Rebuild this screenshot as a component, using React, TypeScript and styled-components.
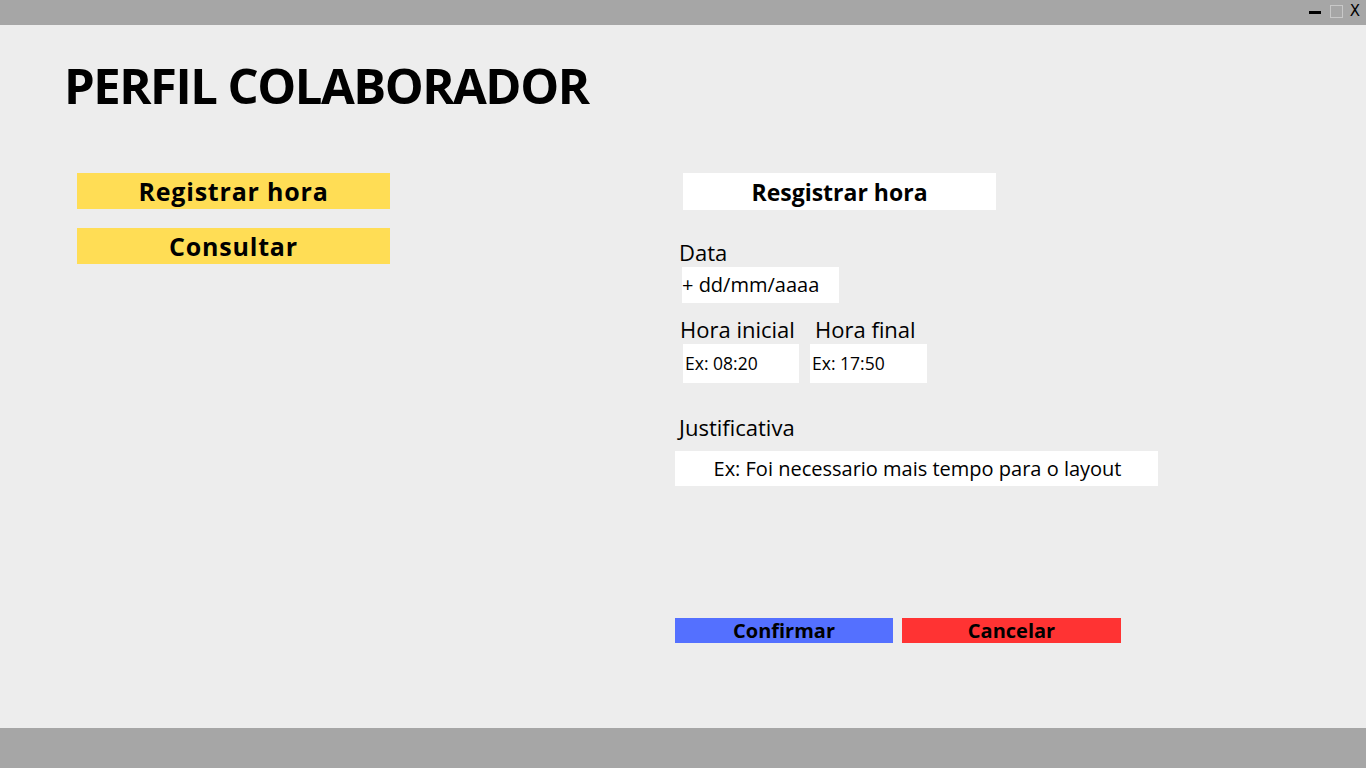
import React from "react";
import styled, { createGlobalStyle } from "styled-components";

const Global = createGlobalStyle`
  html, body { margin: 0; padding: 0; }
  body { font-family: "Open Sans", "Noto Sans", sans-serif; color: #000; }
`;

const Page = styled.div`
  display: flex;
  flex-direction: column;
  width: 1366px;
  height: 768px;
  overflow: hidden;
`;

const TopBar = styled.div`
  height: 25px;
  background: #a6a6a6;
  display: flex;
  justify-content: flex-end;
  align-items: center;
  padding-right: 6px;
`;

const MinIcon = styled.div`
  width: 12px;
  height: 3px;
  background: #000;
  margin-top: -1px;
`;

const MaxIcon = styled.div`
  width: 11px;
  height: 11px;
  border: 1px solid #c8c8c8;
  margin: -2px 7px 0 9px;
`;

const CloseIcon = styled.span`
  font-family: "DejaVu Sans", sans-serif;
  font-size: 15px;
  line-height: 15px;
  margin-top: -2px;
`;

const Main = styled.main`
  flex: 1;
  background: #ededed;
  padding-top: 30px;
`;

const Title = styled.h1`
  margin: 0 0 0 64px;
  font-size: 49px;
  line-height: 60px;
  font-weight: 700;
  letter-spacing: -1.5px;
`;

const Columns = styled.div`
  display: grid;
  grid-template-columns: 313px 483px;
  column-gap: 285px;
  padding-left: 77px;
  margin-top: 58px;
`;

const Menu = styled.nav`
  display: flex;
  flex-direction: column;
  gap: 19px;
`;

const MenuButton = styled.button`
  width: 313px;
  height: 36px;
  border: none;
  background: #ffdd55;
  font-family: inherit;
  font-weight: 700;
  font-size: 25px;
  letter-spacing: 0.8px;
  line-height: 33px;
  padding: 0;
  color: #000;
`;

const Form = styled.section`
  display: flex;
  flex-direction: column;
`;

const Heading = styled.div`
  margin-left: 8px;
  width: 313px;
  height: 37px;
  background: #fff;
  font-weight: 700;
  font-size: 23px;
  line-height: 39px;
  text-align: center;
`;

const Label = styled.div<{ $top: number; $left?: number }>`
  margin-top: ${(p) => p.$top}px;
  margin-left: ${(p) => p.$left ?? 4}px;
  font-size: 22px;
  line-height: 24px;
  white-space: nowrap;
`;

const Field = styled.div<{ $w: number; $h: number; $left: number; $size: number; $top?: number; $pad?: number; $center?: boolean }>`
  margin-top: ${(p) => p.$top ?? 2}px;
  margin-left: ${(p) => p.$left}px;
  width: ${(p) => p.$w}px;
  height: ${(p) => p.$h}px;
  background: #fff;
  font-size: ${(p) => p.$size}px;
  line-height: ${(p) => p.$h}px;
  box-sizing: border-box;
  padding-left: ${(p) => p.$pad ?? 2}px;
  white-space: nowrap;
  text-align: ${(p) => (p.$center ? "center" : "left")};
`;

const TimeRow = styled.div`
  display: flex;
  gap: 11px;
  margin: 14px 0 0 5px;
`;

const TimeGroup = styled.div`
  display: flex;
  flex-direction: column;
`;

const Actions = styled.div`
  display: flex;
  gap: 9px;
  margin-top: 132px;
`;

const ActionButton = styled.button<{ $bg: string; $w: number }>`
  width: ${(p) => p.$w}px;
  height: 25px;
  border: none;
  padding: 0;
  background: ${(p) => p.$bg};
  font-family: inherit;
  font-weight: 700;
  font-size: 20px;
  line-height: 25px;
  color: #000;
`;

const BottomBar = styled.div`
  height: 40px;
  background: #a6a6a6;
`;

export default function App() {
  return (
    <Page>
      <Global />
      <TopBar>
        <MinIcon />
        <MaxIcon />
        <CloseIcon>X</CloseIcon>
      </TopBar>
      <Main>
        <Title>PERFIL COLABORADOR</Title>
        <Columns>
          <Menu>
            <MenuButton>Registrar hora</MenuButton>
            <MenuButton>Consultar</MenuButton>
          </Menu>
          <Form>
            <Heading>Resgistrar hora</Heading>
            <Label $top={30}>Data</Label>
            <Field $w={157} $h={36} $left={7} $size={20} $top={3} $pad={0}>+ dd/mm/aaaa</Field>
            <TimeRow>
              <TimeGroup>
                <Label $top={0} $left={0}>Hora inicial</Label>
                <Field $w={116} $h={39} $left={3} $size={17.5} $top={3}>Ex: 08:20</Field>
              </TimeGroup>
              <TimeGroup>
                <Label $top={0} $left={5}>Hora final</Label>
                <Field $w={117} $h={39} $left={0} $size={17.5} $top={3}>Ex: 17:50</Field>
              </TimeGroup>
            </TimeRow>
            <Label $top={32}>Justificativa</Label>
            <Field $w={483} $h={35} $left={0} $size={20} $top={12} $center>
              Ex: Foi necessario mais tempo para o layout
            </Field>
            <Actions>
              <ActionButton $bg="#5470ff" $w={218}>Confirmar</ActionButton>
              <ActionButton $bg="#ff3333" $w={219}>Cancelar</ActionButton>
            </Actions>
          </Form>
        </Columns>
      </Main>
      <BottomBar />
    </Page>
  );
}
